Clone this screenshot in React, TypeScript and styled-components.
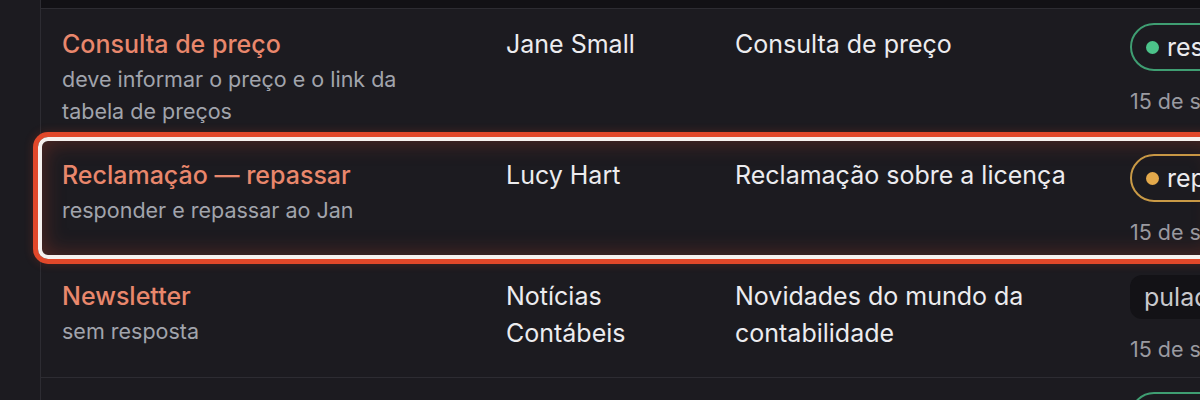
import React from "react";
import styled, { createGlobalStyle, css } from "styled-components";

const GlobalStyle = createGlobalStyle`
  html, body {
    margin: 0;
    padding: 0;
    background: #1c1b20;
    overflow: hidden;
  }
  body {
    font-family: Inter, "Noto Sans", "Liberation Sans", sans-serif;
    color: #ececef;
  }
`;

const Page = styled.div`
  display: flex;
  width: 1200px;
  height: 400px;
  overflow: hidden;
`;

const Sidebar = styled.div`
  flex: 0 0 40px;
  border-right: 1px solid #2d2c32;
  background: #1c1b20;
`;

const Main = styled.div`
  flex: 1;
  min-width: 0;
  display: flex;
  flex-direction: column;
`;

const TopBand = styled.div`
  height: 8px;
  flex: 0 0 8px;
  background: #121115;
  border-bottom: 1px solid #2d2c32;
`;

const Row = styled.div<{ $active?: boolean }>`
  position: relative;
  display: grid;
  grid-template-columns: 444px 229px 395px 1fr;
  align-items: start;
  padding: 14px 0 12px 21px;
  border-bottom: 1px solid #2d2c32;

  ${(p) =>
    p.$active &&
    css`
      isolation: isolate;
      padding-bottom: 12px;
      &::after {
        content: "";
        position: absolute;
        top: -3px;
        left: -3px;
        right: -20px;
        bottom: 1px;
        border: 4px solid #f6f1ef;
        border-radius: 10px;
        box-shadow: 0 0 0 5px #e1482a, 0 0 10px 5px rgba(225, 72, 42, 0.22),
          inset 0 0 22px rgba(205, 66, 40, 0.34);
        pointer-events: none;
      }
    `}
`;

const TextCell = styled.div<{ $space: number }>`
  padding-top: 3px;
  padding-right: ${(p) => p.$space}px;
  font-size: 25px;
  line-height: 37px;
  color: #ececef;
`;

const Title = styled.div`
  font-size: 25px;
  line-height: 37px;
  font-weight: 500;
  color: #e9876c;
`;

const Note = styled.div`
  font-size: 21.5px;
  line-height: 32px;
  color: #a1a4ac;
`;

const StatusCell = styled.div`
  display: flex;
  flex-direction: column;
  align-items: flex-start;
  white-space: nowrap;
`;

const Pill = styled.div<{ $tone: "green" | "amber" }>`
  box-sizing: border-box;
  height: 48px;
  display: flex;
  align-items: center;
  gap: 8px;
  padding: 0 20px 0 14px;
  border-radius: 24px;
  border: 2px solid ${(p) => (p.$tone === "green" ? "#3f9e72" : "#c99a46")};
  font-size: 25px;
  color: #ececef;
`;

const Dot = styled.span<{ $tone: "green" | "amber" }>`
  width: 13px;
  height: 13px;
  border-radius: 50%;
  background: ${(p) => (p.$tone === "green" ? "#4cc38a" : "#e3a94b")};
`;

const Skipped = styled.div`
  box-sizing: border-box;
  height: 44px;
  display: flex;
  align-items: center;
  padding: 0 16px 0 14px;
  border-radius: 12px;
  background: #131216;
  font-size: 25px;
  color: #c9c9cd;
`;

const DateText = styled.div`
  margin-top: 14px;
  font-size: 21.5px;
  line-height: 32px;
  color: #9a9aa0;
`;

type Item = {
  title: string;
  note: string;
  from: string;
  subject: string;
  status: { label: string; tone?: "green" | "amber" };
  date: string;
  active?: boolean;
};

const items: Item[] = [
  {
    title: "Consulta de preço",
    note: "deve informar o preço e o link da tabela de preços",
    from: "Jane Small",
    subject: "Consulta de preço",
    status: { label: "respondido", tone: "green" },
    date: "15 de set., 10:42",
  },
  {
    title: "Reclamação — repassar",
    note: "responder e repassar ao Jan",
    from: "Lucy Hart",
    subject: "Reclamação sobre a licença",
    status: { label: "repassado", tone: "amber" },
    date: "15 de set., 10:40",
    active: true,
  },
  {
    title: "Newsletter",
    note: "sem resposta",
    from: "Notícias Contábeis",
    subject: "Novidades do mundo da contabilidade",
    status: { label: "pulado" },
    date: "15 de set., 10:31",
  },
  {
    title: "Consulta de preço",
    note: "deve informar o preço e o link da tabela de preços",
    from: "Mark Stone",
    subject: "Preço do plano anual",
    status: { label: "respondido", tone: "green" },
    date: "15 de set., 10:12",
  },
];

export default function App() {
  return (
    <>
      <GlobalStyle />
      <Page>
        <Sidebar />
        <Main>
          <TopBand />
          {items.map((item, i) => (
            <Row key={i} $active={item.active}>
              <TextCell $space={60}>
                <Title>{item.title}</Title>
                <Note>{item.note}</Note>
              </TextCell>
              <TextCell $space={40}>{item.from}</TextCell>
              <TextCell $space={44}>{item.subject}</TextCell>
              <StatusCell>
                {item.status.tone ? (
                  <Pill $tone={item.status.tone}>
                    <Dot $tone={item.status.tone} />
                    {item.status.label}
                  </Pill>
                ) : (
                  <Skipped>{item.status.label}</Skipped>
                )}
                <DateText>{item.date}</DateText>
              </StatusCell>
            </Row>
          ))}
        </Main>
      </Page>
    </>
  );
}
